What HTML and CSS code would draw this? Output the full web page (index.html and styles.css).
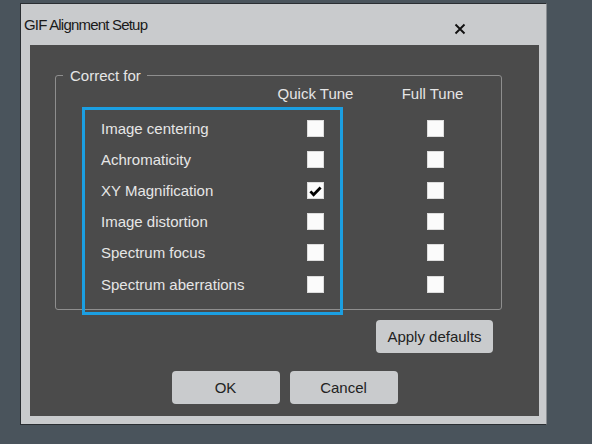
FILE: index.html
```html
<!DOCTYPE html>
<html>
<head>
<meta charset="utf-8">
<link rel="stylesheet" href="styles.css">
</head>
<body>
<div class="dialog">
  <div class="titlebar">
    <span class="title">GIF Alignment Setup</span>
    <svg class="close" width="12" height="12" viewBox="0 0 12 12"><path d="M1.5 1.5 L10.5 10.5 M10.5 1.5 L1.5 10.5" stroke="#111" stroke-width="1.9" fill="none"/></svg>
  </div>
  <div class="panel">
    <fieldset class="group">
      <legend class="legend">Correct for</legend>
      <div class="hdr">
        <span class="hspacer"></span>
        <span class="hcell">Quick Tune</span>
        <span class="hgap"></span>
        <span class="hcell">Full Tune</span>
      </div>
      <div class="body">
        <div class="bluebox">
          <div class="row"><span class="label">Image centering</span><span class="cell"><span class="cb"></span></span></div>
          <div class="row"><span class="label">Achromaticity</span><span class="cell"><span class="cb"></span></span></div>
          <div class="row"><span class="label">XY Magnification</span><span class="cell"><span class="cb"><svg width="15" height="15" viewBox="0 0 15 15"><path d="M2.4 8.4 L5.6 11.8 L12.6 4.6" stroke="#000" stroke-width="2.8" fill="none" stroke-linejoin="miter"/></svg></span></span></div>
          <div class="row"><span class="label">Image distortion</span><span class="cell"><span class="cb"></span></span></div>
          <div class="row"><span class="label">Spectrum focus</span><span class="cell"><span class="cb"></span></span></div>
          <div class="row"><span class="label">Spectrum aberrations</span><span class="cell"><span class="cb"></span></span></div>
        </div>
        <div class="fullcol">
          <div class="row"><span class="cell"><span class="cb"></span></span></div>
          <div class="row"><span class="cell"><span class="cb"></span></span></div>
          <div class="row"><span class="cell"><span class="cb"></span></span></div>
          <div class="row"><span class="cell"><span class="cb"></span></span></div>
          <div class="row"><span class="cell"><span class="cb"></span></span></div>
          <div class="row"><span class="cell"><span class="cb"></span></span></div>
        </div>
      </div>
    </fieldset>
    <div class="applyrow"><button class="btn apply">Apply defaults</button></div>
    <div class="okrow">
      <button class="btn ok">OK</button>
      <button class="btn ok">Cancel</button>
    </div>
  </div>
</div>
</body>
</html>
```

FILE: styles.css
```css
html, body {
  margin: 0;
  padding: 0;
  background: #4a545c;
  width: 592px;
  height: 444px;
  overflow: hidden;
}
body {
  padding: 3px 0 0 20px;
  box-sizing: border-box;
  font-family: "Liberation Sans", Arial, sans-serif;
}
.dialog {
  width: 527px;
  height: 422px;
  box-sizing: border-box;
  background: #c9cbcd;
  border: 1px solid #2a2e32;
  border-right-color: #8a8e92;
  display: flex;
  flex-direction: column;
}
.titlebar {
  height: 41px;
  display: flex;
  justify-content: space-between;
  padding: 0 0 0 3px;
}
.title {
  font-size: 15px;
  letter-spacing: -0.8px;
  color: #1a1a1a;
  margin-top: 12px;
  line-height: 17px;
}
.close {
  margin: 18.5px 80px 0 0;
}
.panel {
  margin: 0 7px 8px 9px;
  height: 371px;
  background: #4b4b4b;
  display: flex;
  flex-direction: column;
}
.group {
  margin: 21.5px 0 0 25px;
  padding: 0;
  width: 447px;
  height: 243px;
  box-sizing: border-box;
  border: 1px solid #8e8e8e;
  border-radius: 3px;
  min-width: 0;
}
.legend {
  margin-left: 7px;
  padding: 0 6px 0 7px;
  font-size: 15px;
  line-height: 17px;
  color: #e6e6e6;
}
.hdr {
  display: flex;
  height: 18px;
  margin-top: 1.5px;
  font-size: 15px;
  line-height: 18px;
  color: #e6e6e6;
}
.hspacer { width: 239.5px; flex: none; }
.hgap { width: 77px; flex: none; }
.hcell {
  width: 40px;
  flex: none;
  display: flex;
  justify-content: center;
  white-space: nowrap;
}
.body {
  display: flex;
  margin-top: 4px;
}
.bluebox {
  margin-left: 26px;
  width: 261px;
  height: 208px;
  flex: none;
  box-sizing: border-box;
  border: 3px solid #1b9fe2;
  padding: 2.5px 4.5px 0 16px;
}
.fullcol {
  margin-left: 72px;
  padding-top: 5.5px;
}
.row {
  height: 31.2px;
  display: flex;
  align-items: center;
}
.label {
  width: 194.5px;
  font-size: 15px;
  color: #e6e6e6;
  white-space: nowrap;
}
.cell {
  width: 40px;
  display: flex;
  justify-content: center;
}
.cb {
  width: 17px;
  height: 17px;
  box-sizing: border-box;
  background: #fbfbfb;
  border: 1px solid #dcdcdc;
  display: flex;
  align-items: center;
  justify-content: center;
}
.applyrow {
  display: flex;
  justify-content: flex-end;
  margin: 10.5px 46px 0 0;
}
.btn {
  height: 33px;
  background: #c9cbcd;
  border: none;
  border-radius: 4px;
  font-family: "Liberation Sans", Arial, sans-serif;
  font-size: 15px;
  color: #222;
  padding: 0;
}
.apply { width: 117px; }
.okrow {
  display: flex;
  justify-content: center;
  gap: 10px;
  margin-top: 18px;
}
.ok { width: 108px; }
```
